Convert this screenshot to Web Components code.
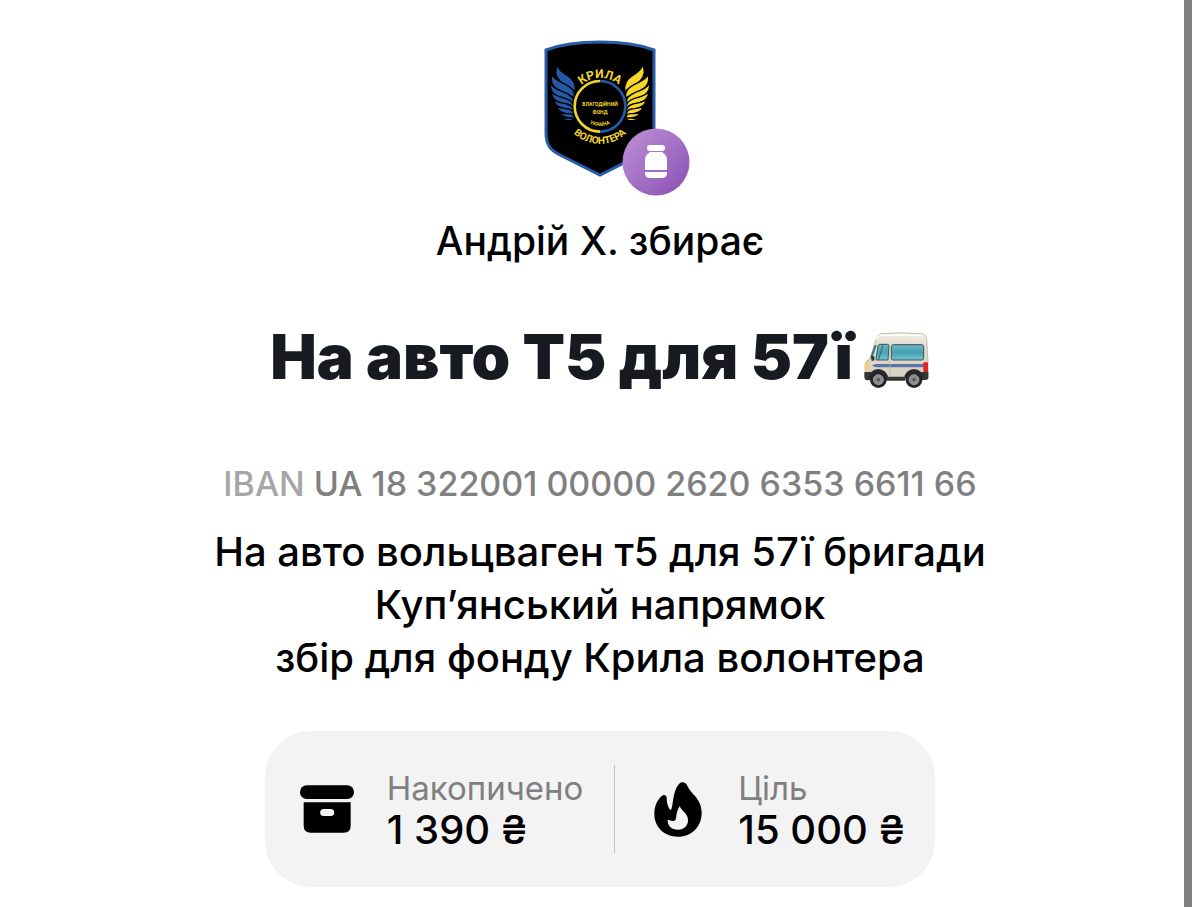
<!DOCTYPE html>
<html lang="uk">
<head>
<meta charset="utf-8">
<meta name="viewport" content="width=device-width, initial-scale=1">
<title>На авто Т5 для 57ї</title>
<style>
    body {
        margin: 0;
        background: #fff;
        color: #000;
        font-family: Inter, "Liberation Sans", sans-serif;
    }
</style>
</head>
<body>
<jar-page>
    <jar-avatar></jar-avatar>
    <jar-header>
        <span slot="owner">Андрій Х. збирає</span>
        <span slot="title">На авто Т5 для 57ї</span>
        <van-emoji slot="emoji"></van-emoji>
    </jar-header>
    <jar-details>
        <span slot="iban">UA 18 322001 00000 2620 6353 6611 66</span>
        <span>На авто вольцваген т5 для 57ї бригади<br>Купʼянський напрямок<br>збір для фонду Крила волонтера</span>
    </jar-details>
    <jar-stats>
        <jar-stat icon="box" label="Накопичено">1 390 ₴</jar-stat>
        <jar-stat icon="flame" label="Ціль">15 000 ₴</jar-stat>
    </jar-stats>
</jar-page>

<script>
/** Shared base: puts the styles and markup of a class in an open shadow root. */
class JarElement extends HTMLElement {
    constructor() {
        super();
        this.attachShadow({ mode: 'open' });
    }

    connectedCallback() {
        this.shadowRoot.innerHTML = `<style>${this.constructor.styles}</style>${this.markup()}`;
    }
}

/** <jar-page>: centred column with the scroll rail on the right. */
class JarPage extends JarElement {
    static get styles() {
        return `
            :host {
                display: flex;
                min-height: 100vh;
            }
            main {
                flex: 1;
                min-width: 0;
                box-sizing: border-box;
                padding: 38px 0 16px 16px; /* left side balances the rail */
                display: flex;
                flex-direction: column;
                align-items: center;
                text-align: center;
            }
            .rail {
                flex: none;
                width: 8px;
                margin-right: 8px;
                background: #808080;
            }
        `;
    }

    markup() {
        return `<main><slot></slot></main><div class="rail"></div>`;
    }
}

/** <jar-avatar>: the fund's shield with the jar badge over its corner. */
class JarAvatar extends JarElement {
    static get styles() {
        return `
            :host {
                display: block;
                position: relative;
                width: 144px;
                height: 144px;
            }
            svg {
                display: block;
            }
            .badge {
                position: absolute;
                right: -18px;
                bottom: -14px;
            }
            text {
                font-family: Roboto, "Liberation Sans", sans-serif;
                font-weight: 700;
                fill: #f5d72c;
                text-anchor: middle;
            }
        `;
    }

    markup() {
        const feathers = [
            'M112 104C117 126 136 130 148 141C164 152 168 166 166 186C150 168 110 160 107 127C107 119 109 112 112 104Z',
            'M94 132C104 152 124 156 138 164C156 174 166 184 163 204C144 188 97 184 94 150Z',
            'M90 158C100 178 120 180 134 187C150 194 163 202 161 220C142 206 99 207 92 174Z',
            'M94 185C104 199 122 201 136 205C150 209 162 216 160 233C142 220 106 222 96 198Z',
            'M103 209C114 219 130 219 141 222C152 225 162 232 160 246C144 236 116 238 105 220Z',
            'M113 230C124 236 136 235 146 237C155 239 162 244 161 257C147 250 125 253 115 239Z',
            'M123 249C133 252 142 250 150 251C157 252 163 256 162 266C150 262 134 265 124 256Z',
            'M130 265C141 266 148 262 163 265C158 274 146 274 131 270Z'
        ].map(d => `<path d="${d}"/>`).join('');

        return `
            <svg width="144" height="144" viewBox="0 0 144 144" role="img" aria-label="Крила волонтера">
                <defs>
                    <path id="top" d="M43 69a29 29 0 0 1 58 0"/>
                    <path id="bottom" d="M34 68a38 38 0 0 0 76 0"/>
                    <path id="inner" d="M50 66a22 22 0 0 0 44 0"/>
                </defs>
                <path d="M18 12C34 6 52 4 72 4s38 2 54 8v82c0 13-4 18-14 23L72 137 32 117c-10-5-14-10-14-23Z" fill="#000" stroke="#285ca8" stroke-width="3"/>
                <path d="M63 145h17" stroke="#eee"/>
                <g transform="translate(-8 -8) scale(.3333)">
                    <g fill="#2459a8" stroke="#000" stroke-width="4">${feathers}</g>
                    <g fill="#f6d728" stroke="#000" stroke-width="4" transform="translate(480 0) scale(-1 1)">${feathers}</g>
                    <path d="M240 153a76 76 0 0 0 0 152" fill="none" stroke="#f1d52f" stroke-width="8"/>
                    <path d="M240 153a76 76 0 0 1 0 152" fill="none" stroke="#2459a8" stroke-width="8"/>
                </g>
                <text font-size="12"><textPath href="#top" startOffset="50%">КРИЛА</textPath></text>
                <text font-size="10"><textPath href="#bottom" startOffset="50%">ВОЛОНТЕРА</textPath></text>
                <text x="72" y="68" font-size="5">БЛАГОДІЙНИЙ</text>
                <text x="72" y="76" font-size="5">ФОНД</text>
                <text font-size="5"><textPath href="#inner" startOffset="50%">УКРАЇНА</textPath></text>
            </svg>
            <svg class="badge" width="68" height="68" viewBox="0 0 68 68" aria-hidden="true">
                <defs>
                    <linearGradient id="purple" x1="0" y1="0" x2="1" y2="1">
                        <stop offset="0" stop-color="#bd92d6"/>
                        <stop offset="1" stop-color="#8b4fb3"/>
                    </linearGradient>
                </defs>
                <circle cx="34" cy="34" r="33.500" fill="url(#purple)"/>
                <rect x="25" y="17" width="18" height="6" rx="3" fill="#fff"/>
                <path d="M28 24h12q1 0 1 1q4 2 4 7v10H23v-10q0-5 4-7q0-1 1-1ZM23 44h22v1q0 5-5 5H28q-5 0-5-5Z" fill="#fff"/>
            </svg>
        `;
    }
}

/** <jar-header>: who collects, and what for. */
class JarHeader extends JarElement {
    static get styles() {
        return `
            :host {
                display: block;
                margin-top: 32px;
            }
            p {
                margin: 0;
                font-size: 39px;
                font-weight: 450;
                line-height: 53px;
            }
            h1 {
                display: flex;
                flex-wrap: wrap;
                justify-content: center;
                align-items: center;
                gap: 10px;
                margin: 52px 0 0;
                font-size: 62px;
                font-weight: 900;
                line-height: 76px;
                color: #181a22;
            }
        `;
    }

    markup() {
        return `
            <p><slot name="owner"></slot></p>
            <h1><slot name="title"></slot><slot name="emoji"></slot></h1>
        `;
    }
}

/** <van-emoji>: small camper drawn inline with the title. */
class VanEmoji extends JarElement {
    static get styles() {
        return `
            :host {
                display: block;
                padding-top: 6px;
            }
            svg {
                display: block;
            }
        `;
    }

    markup() {
        return `
            <svg width="67" height="57" viewBox="69 36 201 171" aria-hidden="true">
                <defs>
                    <linearGradient id="glass" x1="0" y1="0" x2="0" y2="1">
                        <stop offset="0" stop-color="#6cb7c4"/>
                        <stop offset=".5" stop-color="#46a0b0"/>
                        <stop offset="1" stop-color="#72c6d2"/>
                    </linearGradient>
                    <linearGradient id="body" x1="0" y1="0" x2="0" y2="1">
                        <stop offset="0" stop-color="#f2eee5"/>
                        <stop offset=".3" stop-color="#e2dccf"/>
                        <stop offset="1" stop-color="#d6d0c2"/>
                    </linearGradient>
                </defs>
                <path d="M122 41Q180 36 245 41Q258 42 260 56L264 124V176H80L75 150V132Q77 122 90 117L106 64Q111 45 122 41Z" fill="url(#body)" stroke="#aaa397" stroke-width="2"/>
                <path d="M110 58Q112 48 124 47Q184 43 250 47" fill="none" stroke="#fffdf7" stroke-width="4"/>
                <path d="M110 76L96 116L91 112L104 76Z" fill="#356d79"/>
                <path d="M119 73H143Q147 73 147 78L144 120H109Q107 120 108 116L114 78Q115 73 119 73Z" fill="url(#glass)" stroke="#425158" stroke-width="3"/>
                <path d="M129 74L116 119" stroke="#3b626a" stroke-width="3"/>
                <rect x="154" y="74" width="97" height="46" rx="6" fill="url(#glass)" stroke="#425158" stroke-width="3"/>
                <rect x="94" y="108" width="9" height="14" rx="3" fill="#343638"/>
                <path d="M108 132H263V142H112Q100 142 96 136Z" fill="#5c73a5"/>
                <path d="M150 122V176" stroke="#bcb5a7" stroke-width="2"/>
                <path d="M76 130L90 125Q90 139 83 149L75 154Z" fill="#f3cb77"/>
                <rect x="250" y="127" width="14" height="30" rx="2" fill="#e12425"/>
                <path d="M73 156H96V181H81Q73 179 73 170ZM136 170H196V182H136ZM244 156H265V174Q264 180 256 180H244Z" fill="#343536"/>
                <path d="M86 174a29 27 0 0 1 58 0ZM193 174a29 27 0 0 1 58 0Z" fill="#292a2b"/>
                <g fill="#242526">
                    <circle cx="115" cy="179" r="25"/>
                    <circle cx="222" cy="179" r="25"/>
                </g>
                <g fill="#888b8e" stroke="#b0b2b3" stroke-width="2">
                    <circle cx="115" cy="179" r="15"/>
                    <circle cx="222" cy="179" r="15"/>
                </g>
                <g fill="#54575a">
                    <circle cx="115" cy="179" r="5"/>
                    <circle cx="222" cy="179" r="5"/>
                </g>
            </svg>
        `;
    }
}

/** <jar-details>: account number and description. */
class JarDetails extends JarElement {
    static get styles() {
        return `
            :host {
                display: block;
                margin-top: 67px;
            }
            p {
                margin: 0;
            }
            .iban {
                font-size: 34px;
                font-weight: 500;
                line-height: 44px;
                color: #808080;
            }
            .iban span {
                color: #a6a6a6;
            }
            .text {
                margin-top: 19px;
                font-size: 40px;
                font-weight: 450;
                line-height: 53px;
            }
        `;
    }

    markup() {
        return `
            <p class="iban"><span>IBAN</span> <slot name="iban"></slot></p>
            <p class="text"><slot></slot></p>
        `;
    }
}

/** <jar-stats>: rounded card holding the totals. */
class JarStats extends JarElement {
    static get styles() {
        return `
            :host {
                display: flex;
                align-items: center;
                gap: 31px;
                margin-top: 47px;
                padding: 34px 30px;
                border-radius: 46px;
                background: #f3f3f3;
            }
            ::slotted(:not(:first-child)) {
                padding-left: 31px;
                border-left: 1px solid #c4c4c4;
            }
        `;
    }

    markup() {
        return `<slot></slot>`;
    }
}

/** <jar-stat>: icon, label and amount. */
class JarStat extends JarElement {
    static get icons() {
        return {
            box: `
                <svg width="54" height="48" viewBox="120 183 162 142" aria-hidden="true">
                    <rect x="120" y="183" width="162" height="41" rx="20"/>
                    <path fill-rule="evenodd" d="M131 234H272V304Q272 325 251 325H152Q131 325 131 304ZM191 254a10.500 10.500 0 0 0 0 21h21a10.500 10.500 0 0 0 0-21Z"/>
                </svg>`,
            flame: `
                <svg width="48" height="55" viewBox="164 172 144 165" aria-hidden="true">
                    <path fill-rule="evenodd" d="M249 173C256 173 261 177 264 183C268 193 277 203 287 214C299 228 307 244 307 264C307 306 277 336 236 336C195 336 165 307 165 268C165 244 174 226 187 214C194 209 201 211 202 219C203 236 205 248 215 257C220 244 220 229 224 211C228 193 235 181 242 175C244 174 246 173 249 173ZM241 245C235 254 231 265 230 282C227 289 222 290 216 288L205 285C204 303 216 315 236 315C255 315 266 303 266 286C266 277 262 271 257 265C251 258 244 253 241 245Z"/>
                </svg>`
        };
    }

    static get styles() {
        return `
            :host {
                display: flex;
                align-items: center;
                gap: 28px;
                min-height: 88px;
                text-align: left;
            }
            .icon {
                display: grid;
                place-items: center;
                width: 64px;
                height: 64px;
            }
            .label {
                display: block;
                font-size: 33px;
                line-height: 42px;
                color: #808080;
            }
            .value {
                display: block;
                font-size: 40px;
                font-weight: 500;
                line-height: 42px;
            }
        `;
    }

    markup() {
        return `
            <span class="icon">${JarStat.icons[this.getAttribute('icon')]}</span>
            <div>
                <span class="label">${this.getAttribute('label')}</span>
                <span class="value"><slot></slot></span>
            </div>
        `;
    }
}

customElements.define('jar-page', JarPage);
customElements.define('jar-avatar', JarAvatar);
customElements.define('jar-header', JarHeader);
customElements.define('van-emoji', VanEmoji);
customElements.define('jar-details', JarDetails);
customElements.define('jar-stats', JarStats);
customElements.define('jar-stat', JarStat);
</script>
</body>
</html>
